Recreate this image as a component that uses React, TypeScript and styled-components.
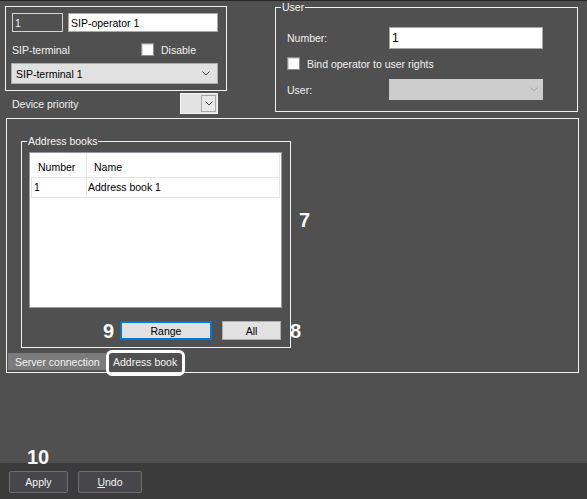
import React from "react";
import styled, { createGlobalStyle } from "styled-components";

const GlobalStyle = createGlobalStyle`
  html, body {
    margin: 0;
    padding: 0;
    background: #505050;
  }
  body {
    font-family: "Liberation Sans", Arial, sans-serif;
    font-size: 10.5px;
    color: #f0f0f0;
  }
  * {
    box-sizing: border-box;
  }
`;

function Chevron({ color = "#404040" }: { color?: string }) {
  return (
    <svg width="8" height="5" viewBox="0 0 8 5">
      <path d="M0.5 0.5 L4 4 L7.5 0.5" fill="none" stroke={color} strokeWidth="1" />
    </svg>
  );
}

export default function App() {
  return (
    <>
      <GlobalStyle />
      <Window>
        <Main>
          <TopSection>
            <LeftColumn>
              <OperatorBox>
                <InputRow>
                  <TextField $w={51} $dark readOnly value="1" />
                  <TextField $w={150} readOnly value="SIP-operator 1" />
                </InputRow>
                <TerminalRow>
                  <Label $w={129}>SIP-terminal</Label>
                  <CheckBox />
                  <CheckText>Disable</CheckText>
                </TerminalRow>
                <Select>
                  <span>SIP-terminal 1</span>
                  <Chevron />
                </Select>
              </OperatorBox>
              <PriorityRow>
                <span>Device priority</span>
                <MiniCombo>
                  <MiniButton>
                    <Chevron />
                  </MiniButton>
                </MiniCombo>
              </PriorityRow>
            </LeftColumn>

            <UserGroup>
              <Legend>User</Legend>
              <FieldRow>
                <Label $w={102}>Number:</Label>
                <TextField $w={154} $h={22} readOnly value="1" />
              </FieldRow>
              <FieldRow $top={8}>
                <CheckBox />
                <CheckText>Bind operator to user rights</CheckText>
              </FieldRow>
              <FieldRow $top={9}>
                <Label $w={102}>User:</Label>
                <DisabledSelect>
                  <Chevron color="#a8a8a8" />
                </DisabledSelect>
              </FieldRow>
            </UserGroup>
          </TopSection>

          <TabPanel>
            <AddressGroup>
              <Legend $shift={-2}>Address books</Legend>
              <List>
                <HeaderRow>
                  <HeaderCell $w={56}>Number</HeaderCell>
                  <HeaderCell>Name</HeaderCell>
                </HeaderRow>
                <DataRow>
                  <DataCell $w={55}>1</DataCell>
                  <DataCell $pad={1}>Address book 1</DataCell>
                </DataRow>
              </List>
              <ButtonRow>
                <FormButton $w={92} $focused>
                  Range
                </FormButton>
                <FormButton $w={59}>All</FormButton>
              </ButtonRow>
            </AddressGroup>
            <TabRow>
              <Tab $w={98}>Server connection</Tab>
              <Tab $w={79} $active>
                Address book
              </Tab>
            </TabRow>
          </TabPanel>
        </Main>

        <Footer>
          <FooterButton $w={59}>Apply</FooterButton>
          <FooterButton $w={64}>
            <u>U</u>ndo
          </FooterButton>
        </Footer>

        <Callout $x={299} $y={209}>7</Callout>
        <Callout $x={290} $y={320}>8</Callout>
        <Callout $x={103} $y={320}>9</Callout>
        <Callout $x={27} $y={446}>10</Callout>
      </Window>
    </>
  );
}

const Window = styled.div`
  position: relative;
  width: 587px;
  height: 499px;
  display: flex;
  flex-direction: column;
  background: #505050;
  border-top: 1px solid #262626;
  overflow: hidden;
`;

const Main = styled.div`
  flex: 1;
  display: flex;
  flex-direction: column;
`;

const TopSection = styled.div`
  display: flex;
  align-items: flex-start;
`;

const LeftColumn = styled.div`
  width: 222px;
  margin: 5px 0 0 5px;
  display: flex;
  flex-direction: column;
`;

const OperatorBox = styled.div`
  border: 1px solid #f2f2f2;
  padding: 6px 8px 6px 5px;
  display: flex;
  flex-direction: column;
`;

const InputRow = styled.div`
  display: flex;
  gap: 5px;
  margin-left: 1px;
`;

const TextField = styled.input<{ $w: number; $h?: number; $dark?: boolean }>`
  width: ${({ $w }) => $w}px;
  height: ${({ $h }) => $h ?? 19}px;
  margin: 0;
  padding: 0 2px;
  font: inherit;
  font-size: ${({ $h }) => ($h ? 12 : 10.5)}px;
  outline: none;
  border: 1px solid ${({ $dark }) => ($dark ? "#d4d4d4" : "#a9a9a9")};
  background: ${({ $dark }) => ($dark ? "#505050" : "#ffffff")};
  color: ${({ $dark }) => ($dark ? "#f4f4f4" : "#000000")};
`;

const TerminalRow = styled.div`
  display: flex;
  align-items: center;
  height: 13px;
  margin: 11px 0 0 1px;
`;

const Label = styled.span<{ $w: number }>`
  display: inline-block;
  width: ${({ $w }) => $w}px;
  flex-shrink: 0;
`;

const CheckBox = styled.span`
  display: inline-block;
  width: 13px;
  height: 13px;
  flex-shrink: 0;
  background: #ffffff;
  border: 1px solid #8c8c8c;
  box-shadow: inset 1px 1px 0 #d8d8d8;
`;

const CheckText = styled.span`
  margin-left: 7px;
`;

const Select = styled.div`
  height: 21px;
  margin-top: 7px;
  display: flex;
  align-items: center;
  justify-content: space-between;
  padding: 0 7px 0 4px;
  background: #e1e1e1;
  border: 1px solid #adadad;
  color: #000000;
`;

const PriorityRow = styled.div`
  height: 21px;
  margin-top: 2px;
  display: flex;
  align-items: center;
  justify-content: space-between;
  padding: 0 9px 0 7px;
`;

const MiniCombo = styled.div`
  width: 38px;
  height: 21px;
  display: flex;
  justify-content: flex-end;
  padding: 1px;
  background: #e3e3e3;
  border: 1px solid #f4f4f4;
`;

const MiniButton = styled.div`
  width: 15px;
  height: 17px;
  display: flex;
  align-items: center;
  justify-content: center;
  background: #e9e9e9;
  border: 1px solid #a8a8a8;
`;

const GroupBox = styled.fieldset`
  margin: 0;
  border: 1px solid #f2f2f2;
  min-width: 0;
`;

const Legend = styled.legend<{ $shift?: number }>`
  padding: 0 1px;
  margin-left: ${({ $shift }) => $shift ?? -6}px;
  line-height: 13px;
  color: #f4f4f4;
`;

const UserGroup = styled(GroupBox)`
  width: 303px;
  margin-left: 48px;
  padding: 13px 10px 11px 11px;
`;

const FieldRow = styled.div<{ $top?: number }>`
  display: flex;
  align-items: center;
  margin-top: ${({ $top }) => $top ?? 0}px;
`;

const DisabledSelect = styled.div`
  width: 154px;
  height: 21px;
  display: flex;
  align-items: center;
  justify-content: flex-end;
  padding-right: 5px;
  background: #cccccc;
`;

const TabPanel = styled.div`
  width: 573px;
  margin: 4px 0 0 6px;
  padding: 0 0 2px 0;
  border: 1px solid #f2f2f2;
  display: flex;
  flex-direction: column;
`;

const AddressGroup = styled(GroupBox)`
  width: 270px;
  margin: 16px 0 0 14px;
  padding: 4px 8px 7px 7px;
`;

const List = styled.div`
  width: 253px;
  height: 156px;
  padding: 1px;
  background: #ffffff;
  border: 1px solid #9a9aa2;
  color: #000000;
`;

const HeaderRow = styled.div`
  display: flex;
  height: 23px;
`;

const HeaderCell = styled.div<{ $w?: number }>`
  display: flex;
  align-items: center;
  padding: 2px 0 0 7px;
  ${({ $w }) => ($w ? `width: ${$w}px;` : "flex: 1;")}
  border-right: 1px solid #e6e6e6;
`;

const DataRow = styled.div`
  display: flex;
  height: 21px;
  border: 1px solid #e6e6e6;
`;

const DataCell = styled.div<{ $w?: number; $pad?: number }>`
  display: flex;
  align-items: center;
  padding: 0 0 2px ${({ $pad }) => $pad ?? 2}px;
  ${({ $w }) => ($w ? `width: ${$w}px; border-right: 1px solid #e6e6e6;` : "flex: 1;")}
`;

const ButtonRow = styled.div`
  display: flex;
  justify-content: flex-end;
  gap: 10px;
  margin-top: 13px;
  padding-right: 1px;
`;

const FormButton = styled.div<{ $w: number; $focused?: boolean }>`
  width: ${({ $w }) => $w}px;
  height: 19px;
  display: flex;
  align-items: center;
  justify-content: center;
  background: #e1e1e1;
  color: #000000;
  border: ${({ $focused }) => ($focused ? "2px solid #0078d7" : "1px solid #adadad")};
`;

const TabRow = styled.div`
  display: flex;
  height: 17px;
  margin: 5px 0 0 1px;
`;

const Tab = styled.div<{ $w: number; $active?: boolean }>`
  position: relative;
  width: ${({ $w }) => $w}px;
  display: flex;
  align-items: center;
  padding-left: 7px;
  background: ${({ $active }) => ($active ? "#505050" : "#7b7b7b")};
  color: #f4f4f4;

  ${({ $active }) =>
    $active &&
    `
    &::after {
      content: "";
      position: absolute;
      left: 0;
      right: 0;
      top: -3px;
      bottom: -6px;
      border: 3px solid #ffffff;
      border-radius: 6px;
    }
  `}
`;

const Footer = styled.div`
  height: 36px;
  display: flex;
  gap: 10px;
  padding: 8px 0 0 9px;
  background: #3b3b3b;
`;

const FooterButton = styled.div<{ $w: number }>`
  width: ${({ $w }) => $w}px;
  height: 22px;
  display: flex;
  align-items: center;
  justify-content: center;
  background: #46464b;
  border: 1px solid #6e6e6e;
  border-radius: 2px;
  color: #f4f4f4;
`;

const Callout = styled.div<{ $x: number; $y: number }>`
  position: absolute;
  left: ${({ $x }) => $x}px;
  top: ${({ $y }) => $y}px;
  font-size: 20px;
  font-weight: bold;
  line-height: 20px;
  color: #f8f8f8;
`;
